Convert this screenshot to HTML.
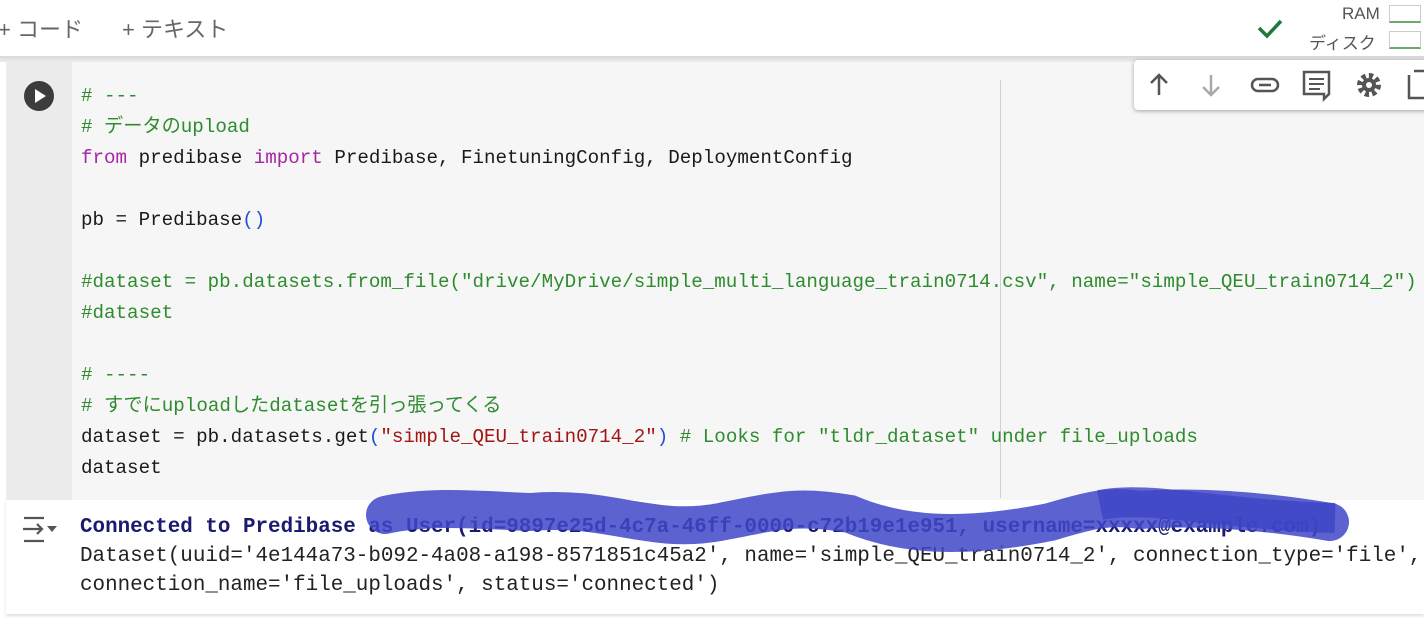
<!DOCTYPE html>
<html><head><meta charset="utf-8"><style>
body{margin:0;width:1424px;height:623px;overflow:hidden;background:#fff;position:relative;font-family:"Liberation Sans","Noto Sans CJK JP",sans-serif}
.top{position:absolute;left:0;top:0;width:1424px;height:57px;background:#fff}
.shadow{position:absolute;left:0;top:56px;width:1424px;height:6px;background:linear-gradient(#d8d8d8,#ececec)}
.gut{position:absolute;left:6px;top:62px;width:66px;height:438px;background:#ececec}
.code{position:absolute;left:72px;top:62px;width:1352px;height:438px;background:#f6f6f6}
.vline{position:absolute;left:1000px;top:80px;width:1px;height:418px;background:#d0d0d0}
pre{margin:0;font-family:"Liberation Mono","Noto Sans CJK JP",monospace}
.src{position:absolute;left:81px;top:81px;font-size:19.2px;line-height:31px;color:#1a1a1a}
.c{color:#2e8b2e}.k{color:#a626a4}.s{color:#a31515}.p{color:#1f4fd8}
.out{position:absolute;left:6px;top:500px;width:1418px;height:114px;background:#fff;box-shadow:0 2px 3px #ddd}
.otxt{position:absolute;left:80px;top:513px;font-size:20.9px;line-height:29px;color:#222;white-space:pre}
.b{font-weight:bold;color:#1a1a6e}
.tb{position:absolute;left:1134px;top:60px;width:300px;height:50px;background:#fff;border-radius:4px;box-shadow:0 1px 4px rgba(0,0,0,.35)}
</style></head><body>
<div class="top">
<div style="position:absolute;left:-2px;top:12px;font-size:22px;color:#666">+ コード</div>
<div style="position:absolute;left:122px;top:12px;font-size:22px;color:#666">+ テキスト</div>
<svg style="position:absolute;left:1256px;top:16px" width="28" height="24"><path d="M3 12 L11 20 L25 5" stroke="#1e7a3a" stroke-width="3.5" fill="none"/></svg>
<div style="position:absolute;left:1342px;top:4px;font-size:17px;color:#555">RAM</div>
<div style="position:absolute;left:1309px;top:29px;font-size:17px;color:#555">ディスク</div>
<div style="position:absolute;left:1389px;top:5px;width:32px;height:18px;border:1px solid #ccc;border-bottom:2px solid #6aaa6a;box-sizing:border-box"></div>
<div style="position:absolute;left:1389px;top:31px;width:32px;height:18px;border:1px solid #ccc;border-bottom:2px solid #6aaa6a;box-sizing:border-box"></div>
</div>
<div class="shadow"></div>
<div class="gut"></div>
<div class="code"></div>
<div class="vline"></div>
<svg style="position:absolute;left:23px;top:80px" width="32" height="32"><circle cx="16" cy="16" r="15" fill="#3c3c3c"/><path d="M12 9 L23 16 L12 23Z" fill="#fff"/></svg>
<pre class="src"><span class="c"># ---</span>
<span class="c"># データのupload</span>
<span class="k">from</span> predibase <span class="k">import</span> Predibase, FinetuningConfig, DeploymentConfig

pb = Predibase<span class="p">()</span>

<span class="c">#dataset = pb.datasets.from_file("drive/MyDrive/simple_multi_language_train0714.csv", name="simple_QEU_train0714_2")</span>
<span class="c">#dataset</span>

<span class="c"># ----</span>
<span class="c"># すでにuploadしたdatasetを引っ張ってくる</span>
dataset = pb.datasets.get<span class="p">(</span><span class="s">"simple_QEU_train0714_2"</span><span class="p">)</span> <span class="c"># Looks for "tldr_dataset" under file_uploads</span>
dataset</pre>
<div class="tb">
<svg width="300" height="50">
<g stroke="#555" stroke-width="2.5" fill="none">
<path d="M25 35 V15 M17 23 L25 15 L33 23"/>
<path d="M77 35 V15 M69 27 L77 35 L85 27" stroke="#aaa"/>
<rect x="118" y="19" width="26" height="12" rx="6"/><path d="M125 25 H137"/>
</g>
<path d="M170 12 H195 V34 L190 39 V34 H170Z" fill="none" stroke="#555" stroke-width="2.5"/>
<path d="M175 19 H190 M175 24 H190 M175 29 H186" stroke="#555" stroke-width="2"/>
<circle cx="235" cy="25" r="9" fill="none" stroke="#555" stroke-width="6" stroke-dasharray="4 3"/>
<circle cx="235" cy="25" r="7" fill="#555"/><circle cx="235" cy="25" r="3" fill="#fff"/>
<path d="M275 15 V38 H290 M280 11 H296 V34" fill="none" stroke="#555" stroke-width="2.5"/>
</svg></div>
<div class="out"></div>
<svg style="position:absolute;left:22px;top:515px" width="38" height="30"><g stroke="#555" stroke-width="2.2" fill="none"><path d="M2 3 H22 M2 26 H22 M1 14 H20 M15 9 L20 14 L15 19"/></g><path d="M25 11 H35 L30 17Z" fill="#555"/></svg>
<pre class="otxt"><span class="b">Connected to Predibase as User(id=9897e25d-4c7a-46ff-0000-c72b19e1e951, username=xxxxx@example.com)</span>
Dataset(uuid='4e144a73-b092-4a08-a198-8571851c45a2', name='simple_QEU_train0714_2', connection_type='file',
connection_name='file_uploads', status='connected')</pre>
<svg style="position:absolute;left:0;top:0" width="1424" height="623">
<path d="M385 515 C430 505 480 510 530 512 C610 505 650 535 720 522 C780 510 800 505 850 514 C900 535 960 540 1050 522 C1090 510 1110 505 1140 510 C1190 506 1260 510 1330 522" stroke="#4048c8" stroke-opacity=".85" stroke-width="38" fill="none" stroke-linecap="round"/>
<path d="M1100 505 C1150 495 1220 515 1335 518" stroke="#3d44c4" stroke-opacity=".8" stroke-width="30" fill="none"/>
</svg>
</body></html>
